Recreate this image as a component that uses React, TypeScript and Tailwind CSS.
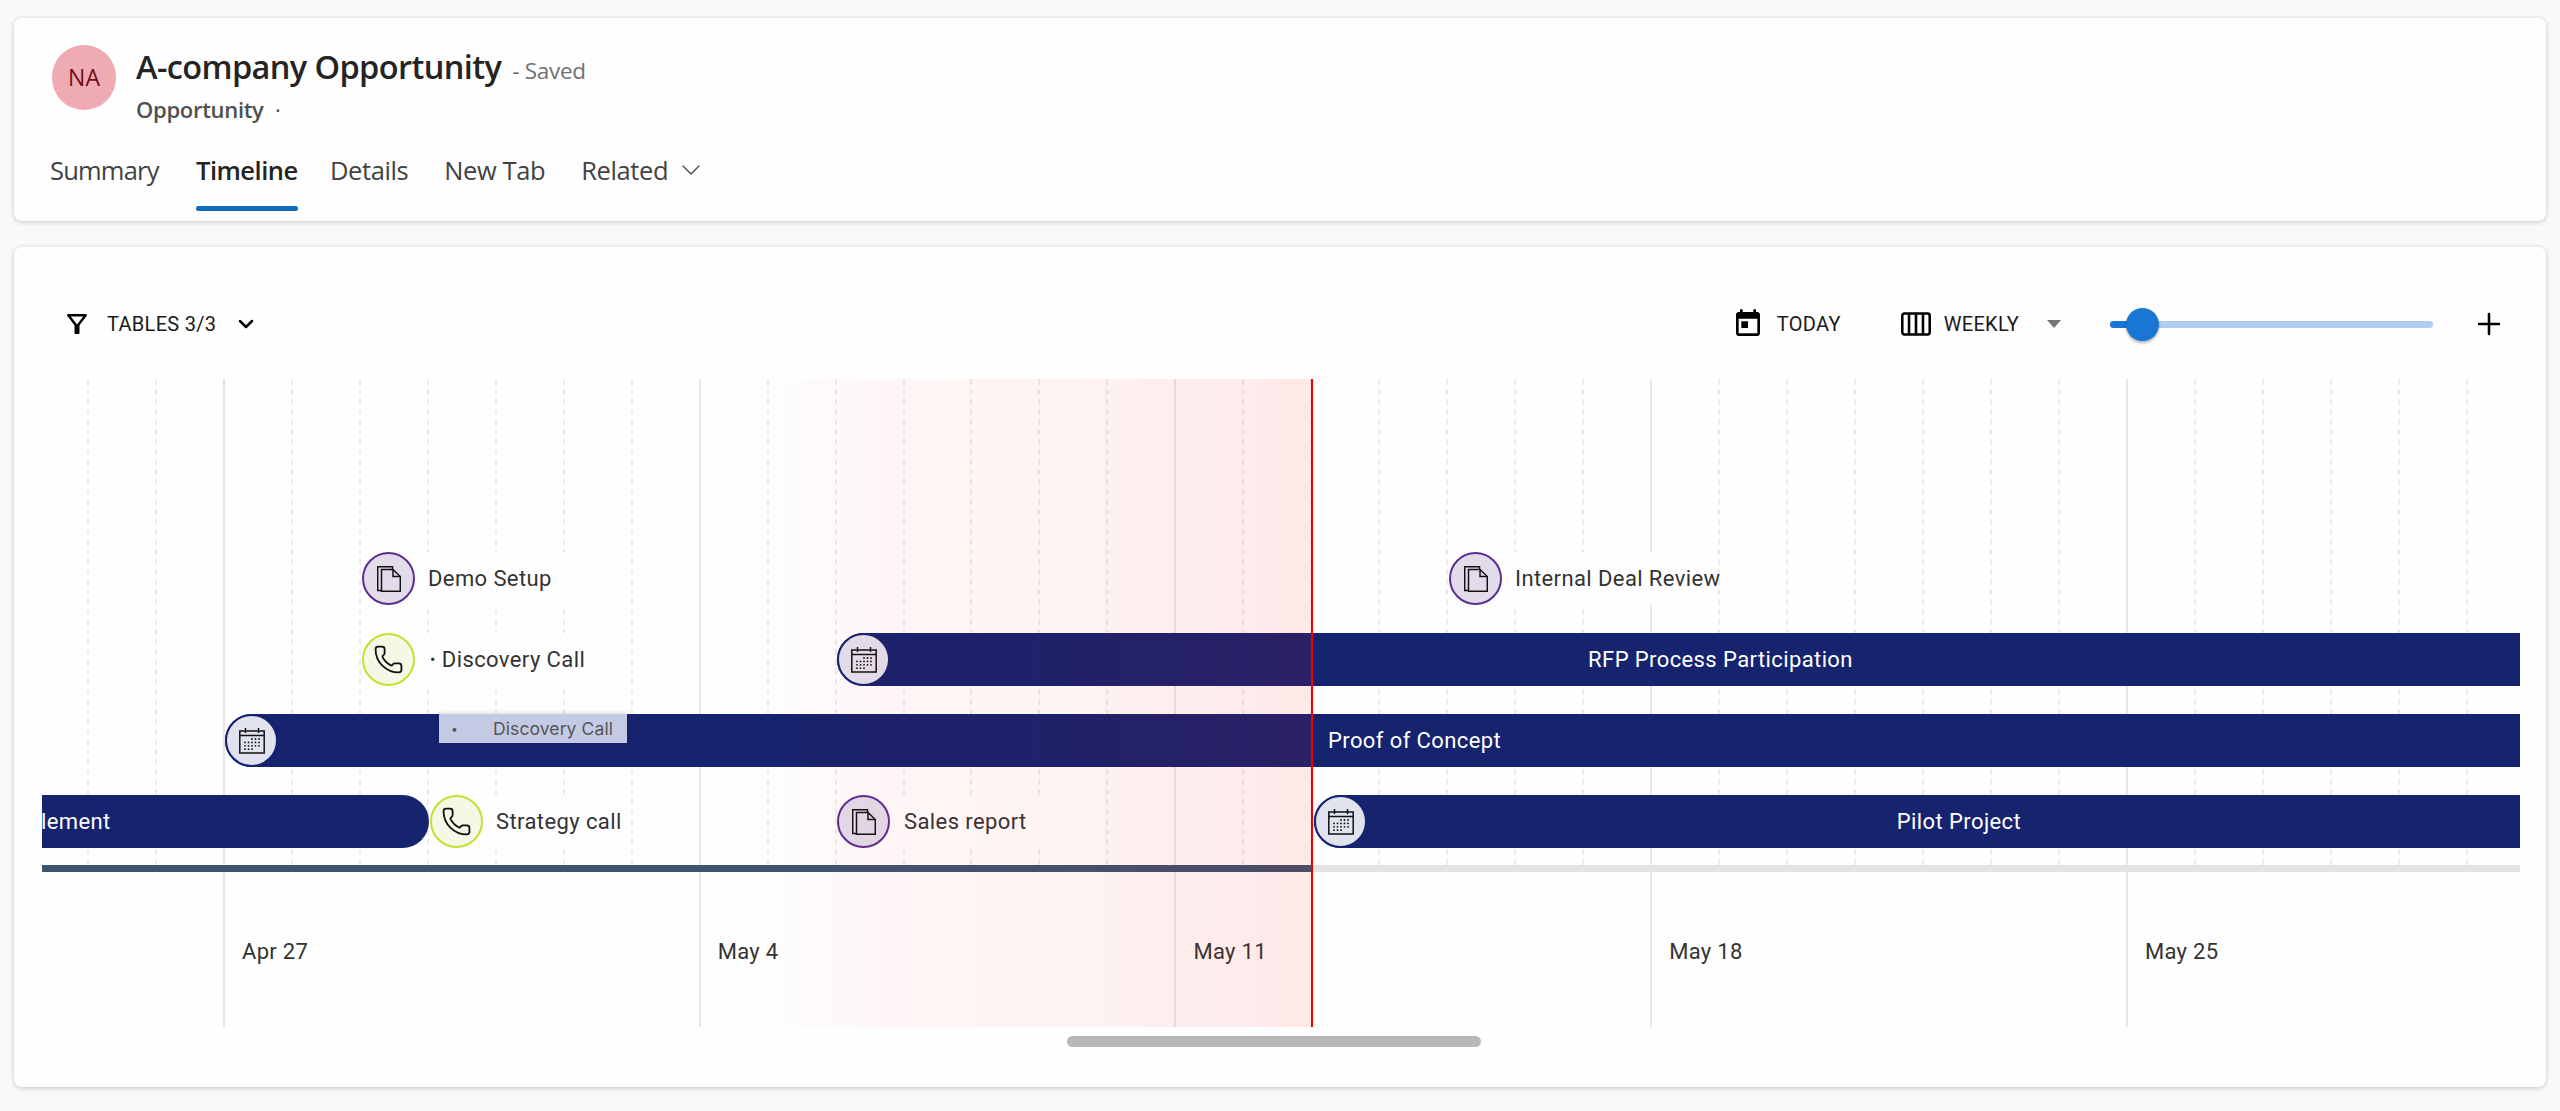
import { Phone, ChevronDown, Plus } from 'lucide-react';

const DAY = 67.96;
const days = Array.from({ length: 36 }, (_, i) => i);
const dates = ['Apr 27', 'May 4', 'May 11', 'May 18', 'May 25'];

function DocIcon() {
  return (
    <svg viewBox="0 0 24 26" className="h-[26px] w-[24px]" fill="none" stroke="#111" strokeWidth="1.500">
      <path d="M4.500 24.500H0.700V0.700H15.500V3.500" />
      <path d="M4.500 3.500H16L23.300 10.500V25.300H4.500Z" />
      <path d="M16 3.500V10.500H23.300" />
    </svg>
  );
}

function CalendarIcon() {
  const dots = [];
  for (let r = 0; r < 4; r++) {
    for (let c = 0; c < 5; c++) {
      if (r === 0 && c < 2) continue;
      if (r === 3 && c > 2) continue;
      dots.push(<circle key={`${r}-${c}`} cx={6 + c * 3.500} cy={11 + r * 3.400} r="0.900" fill="#111" stroke="none" />);
    }
  }
  return (
    <svg viewBox="0 0 26 26" className="h-[26px] w-[26px]" fill="none" stroke="#111" strokeWidth="1.500">
      <rect x="0.800" y="3" width="24.400" height="22" />
      <path d="M0.800 7.500h24.400" />
      <path d="M6.500 0v5M19.500 0v5" />
      {dots}
    </svg>
  );
}

function Marker({ kind }: { kind: 'doc' | 'call' }) {
  if (kind === 'doc') {
    return (
      <div className="flex h-[53px] w-[53px] shrink-0 items-center justify-center rounded-full border-2 border-[#5c2d91] bg-[#e2dcea]">
        <DocIcon />
      </div>
    );
  }
  return (
    <div className="flex h-[53px] w-[53px] shrink-0 items-center justify-center rounded-full border-2 border-[#c9dd2f] bg-[#f4f8e5]">
      <Phone className="h-[31px] w-[31px] text-[#111]" strokeWidth={1.400} />
    </div>
  );
}

function BarCap() {
  return (
    <div className="flex h-[53px] w-[53px] shrink-0 items-center justify-center rounded-full border-2 border-[#16236e] bg-[#e0e2ee]">
      <CalendarIcon />
    </div>
  );
}

export default function App() {
  return (
    <div className="min-h-[1111px] overflow-hidden bg-[#f9f9f9] px-[14px] pt-[18px] font-[Roboto,sans-serif]">
      {/* Header */}
      <div className="h-[203px] rounded-lg bg-[#fefefe] pl-[38px] shadow-[0_1px_5px_rgba(0,0,0,0.22)] font-['Open_Sans',sans-serif]">
        <div className="flex items-start pt-[27px]">
          <div className="flex h-[65px] w-[64px] items-center justify-center rounded-full bg-[#eeabb1] text-[23px] text-[#750b1c]">
            NA
          </div>
          <div className="ml-[20px]">
            <div className="flex items-baseline">
              <span className="text-[32.500px] leading-[44px] font-semibold tracking-[-0.6px] text-[#242424]">A-company Opportunity</span>
              <span className="ml-[11px] text-[22.500px] tracking-[-0.3px] text-[#707070]">- Saved</span>
            </div>
            <div className="mt-[6px] text-[22px] leading-[28px] font-semibold tracking-[-0.3px] text-[#505050]">
              Opportunity <span className="ml-[6px] font-normal">·</span>
            </div>
          </div>
        </div>
        <div className="mt-[30px] flex items-start text-[25.500px] leading-[34px] tracking-[-0.4px] text-[#424242]">
          <span className="ml-[-2px] w-[108px] tracking-[-0.8px] whitespace-nowrap">Summary</span>
          <div className="ml-[38px] flex w-[102px] flex-col">
            <span className="font-semibold tracking-[-0.5px] whitespace-nowrap text-[#242424]">Timeline</span>
            <div className="mt-[19px] h-[5px] rounded-full bg-[#0f6cbd]" />
          </div>
          <span className="ml-[32px]">Details</span>
          <span className="ml-[36px]">New Tab</span>
          <span className="ml-[36px]">Related</span>
          <ChevronDown className="mt-[1px] ml-[7px] h-[32px] w-[32px] text-[#424242]" strokeWidth={0.900} />
        </div>
      </div>

      {/* Timeline card */}
      <div className="mt-[26px] h-[840px] rounded-lg bg-[#fefefe] shadow-[0_1px_5px_rgba(0,0,0,0.22)]">
        <div className="flex h-[132px] items-center pt-[22px] pr-[40px] pl-[48px] text-[20px] tracking-[0.3px] text-[#1a1a1a]">
          <svg viewBox="0 0 24 24" className="h-[30px] w-[30px]" fill="#000">
            <path d="M7 6h10l-5.010 6.300L7 6zm-2.750-.390C6.270 8.200 10 13 10 13v6c0 .550.450 1 1 1h2c.550 0 1-.450 1-1v-6s3.720-4.800 5.750-7.390c.510-.660.040-1.610-.790-1.610H5.040c-.830 0-1.300.950-.790 1.610z" />
          </svg>
          <span className="ml-[15px]">TABLES 3/3</span>
          <ChevronDown className="ml-[18px] h-[24px] w-[24px] text-black" strokeWidth={2.500} />
          <div className="ml-auto flex items-center">
            <svg viewBox="0 0 24 24" className="h-[32px] w-[32px]" fill="#000">
              <path d="M19 3h-1V1h-2v2H8V1H6v2H5c-1.110 0-1.990.9-1.990 2L3 19c0 1.100.890 2 2 2h14c1.100 0 2-.9 2-2V5c0-1.100-.9-2-2-2zm0 16H5V8h14v11zM7 10h5v5H7z" />
            </svg>
            <span className="ml-[13px]">TODAY</span>
            <svg viewBox="0 0 28 22" className="ml-[60px] h-[24px] w-[30px]" fill="none" stroke="#000" strokeWidth="2.400">
              <rect x="1.200" y="1.200" width="25.600" height="19.600" rx="2" />
              <path d="M7.500 1v20M14 1v20M20.500 1v20" />
            </svg>
            <span className="ml-[13px]">WEEKLY</span>
            <div className="ml-[28px] h-0 w-0 border-x-[7px] border-t-[8px] border-x-transparent border-t-[#757575]" />
            <div className="relative ml-[49px] h-[7px] w-[323px] rounded-full bg-[#aecdf0]">
              <div className="h-[7px] w-[32px] rounded-l-full bg-[#1976d2]" />
              <div className="absolute top-[-13px] left-[16px] h-[33px] w-[33px] rounded-full bg-[#1976d2] shadow-[0_2px_3px_rgba(0,0,0,0.3)]" />
            </div>
            <Plus className="ml-[39px] h-[34px] w-[34px] text-black" strokeWidth={1.800} />
          </div>
        </div>

        {/* Chart */}
        <div className="relative ml-[28px] h-[648px] w-[2478px] overflow-hidden">
          {days.map((d) =>
            (d - 2) % 7 === 0 ? (
              <div key={d} className="absolute top-0 h-[648px] w-[2px] bg-[#e6e6e6]" style={{ left: 45 + d * DAY }} />
            ) : (
              <div key={d} className="absolute top-0 h-[486px] border-l-2 border-dashed border-[#ececec]" style={{ left: 45 + d * DAY }} />
            ),
          )}

          <div className="relative flex flex-col gap-[28px] pt-[173px] text-[22px] tracking-[0.4px] whitespace-nowrap text-[#333]">
            <div className="flex h-[53px] items-center">
              <div className="ml-[320px]"><Marker kind="doc" /></div>
              <div className="flex h-[53px] w-[165px] items-center bg-[#fefefe] pl-[13px]">Demo Setup</div>
              <div className="ml-[869px]"><Marker kind="doc" /></div>
              <div className="flex h-[53px] w-[200px] items-center bg-[#fefefe] pl-[13px]">Internal Deal Review</div>
            </div>

            <div className="flex h-[53px] items-center">
              <div className="ml-[320px]"><Marker kind="call" /></div>
              <div className="flex h-[53px] w-[165px] items-center bg-[#fefefe] pl-[15px]">
                <span className="mr-[6px] text-[16px]">•</span>Discovery Call
              </div>
              <div className="ml-[257px] flex h-[53px] flex-1 items-center rounded-l-full rounded-r bg-[#16236e] text-white">
                <BarCap />
                <span className="flex-1 pl-[31px] text-center">RFP Process Participation</span>
              </div>
            </div>

            <div className="relative flex h-[53px] items-center">
              <div className="ml-[183px] flex h-[53px] flex-1 items-center rounded-l-full rounded-r bg-[#16236e] text-white">
                <BarCap />
                <span className="ml-[1050px]">Proof of Concept</span>
              </div>
              <div className="absolute top-0 left-[397px] flex h-[29px] w-[188px] items-center bg-[#c5cae4] pt-[1px] pl-[12px] font-[Inter,sans-serif] text-[17.500px] tracking-[0.1px] text-[#555] shadow-[0_-1px_4px_rgba(0,0,0,0.15)]">
                <span className="w-[42px] text-[12px]">•</span>Discovery Call
              </div>
            </div>

            <div className="flex h-[53px] items-center">
              <div className="flex h-[53px] w-[387px] items-center overflow-hidden rounded-r-full bg-[#16236e] text-white">
                <span className="ml-[-1px]">lement</span>
              </div>
              <div className="ml-[1px]"><Marker kind="call" /></div>
              <div className="flex h-[53px] w-[130px] items-center bg-[#fefefe] pl-[13px]">Strategy call</div>
              <div className="ml-[224px]"><Marker kind="doc" /></div>
              <div className="flex h-[53px] w-[170px] items-center bg-[#fefefe] pl-[14px]">Sales report</div>
              <div className="ml-[254px] flex h-[53px] flex-1 items-center rounded-l-full rounded-r bg-[#16236e] text-white">
                <BarCap />
                <span className="flex-1 pl-[31px] text-center">Pilot Project</span>
              </div>
            </div>
          </div>

          <div className="relative mt-[17px] flex h-[7px]">
            <div className="w-[1270px] bg-[#3d5470]" />
            <div className="flex-1 bg-[#e2e2e2]" />
          </div>

          <div className="relative mt-[68px] ml-[200px] flex text-[22px] leading-[24px] tracking-[0.3px] text-[#333]">
            {dates.map((d) => (
              <span key={d} className="w-[475.750px] shrink-0">{d}</span>
            ))}
          </div>

          {/* Range up to the current day, sits over the bars */}
          <div className="pointer-events-none absolute top-0 left-[660px] h-[648px] w-[609px] bg-[linear-gradient(to_right,rgba(255,0,0,0)_0%,rgba(255,0,0,0.012)_15%,rgba(255,0,0,0.03)_30%,rgba(255,0,0,0.045)_60%,rgba(255,0,0,0.065)_80%,rgba(255,0,0,0.085)_100%)]" />
          <div className="absolute top-0 left-[1269px] h-[648px] w-[2px] bg-[#f00000]" />
        </div>

        <div className="mt-[9px] ml-[1053px] h-[11px] w-[414px] rounded-full bg-[#b8b8b8]" />
      </div>
    </div>
  );
}
